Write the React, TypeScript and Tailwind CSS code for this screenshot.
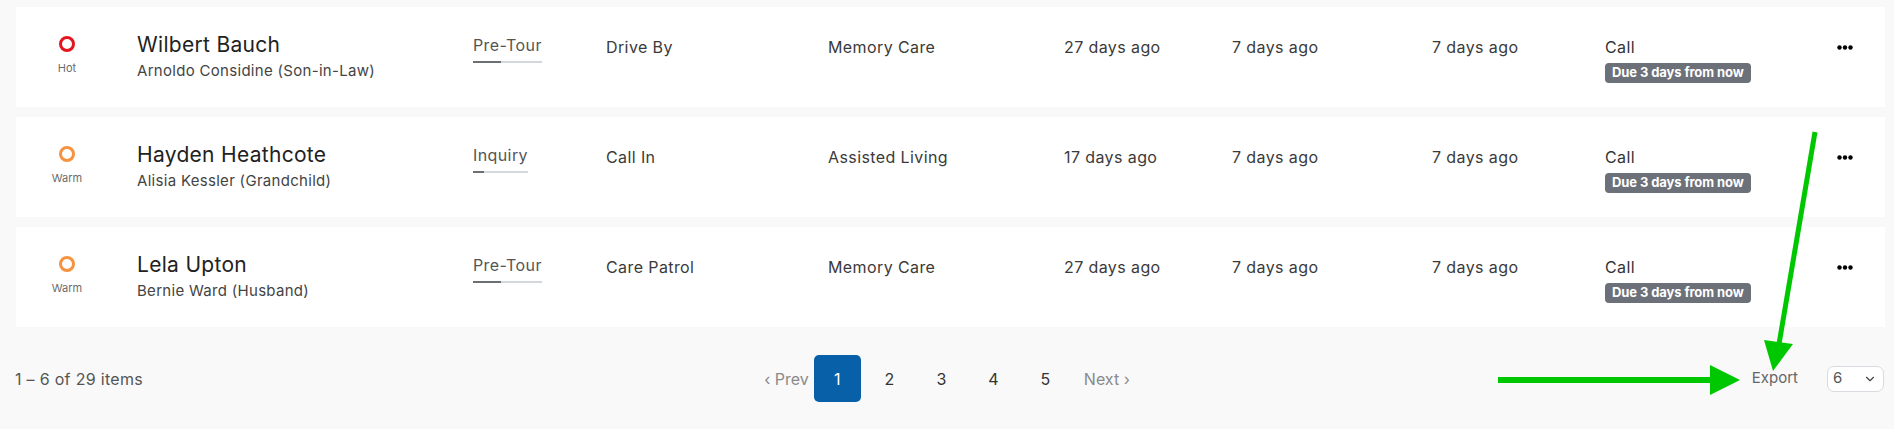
import { ChevronDown } from 'lucide-react';

type Lead = {
  temp: 'Hot' | 'Warm';
  name: string;
  contact: string;
  stage: string;
  progress: number;
  source: string;
  care: string;
  created: string;
  updated: string;
  touched: string;
  task: string;
  due: string;
};

const leads: Lead[] = [
  {
    temp: 'Hot',
    name: 'Wilbert Bauch',
    contact: 'Arnoldo Considine (Son-in-Law)',
    stage: 'Pre-Tour',
    progress: 40,
    source: 'Drive By',
    care: 'Memory Care',
    created: '27 days ago',
    updated: '7 days ago',
    touched: '7 days ago',
    task: 'Call',
    due: 'Due 3 days from now',
  },
  {
    temp: 'Warm',
    name: 'Hayden Heathcote',
    contact: 'Alisia Kessler (Grandchild)',
    stage: 'Inquiry',
    progress: 20,
    source: 'Call In',
    care: 'Assisted Living',
    created: '17 days ago',
    updated: '7 days ago',
    touched: '7 days ago',
    task: 'Call',
    due: 'Due 3 days from now',
  },
  {
    temp: 'Warm',
    name: 'Lela Upton',
    contact: 'Bernie Ward (Husband)',
    stage: 'Pre-Tour',
    progress: 40,
    source: 'Care Patrol',
    care: 'Memory Care',
    created: '27 days ago',
    updated: '7 days ago',
    touched: '7 days ago',
    task: 'Call',
    due: 'Due 3 days from now',
  },
];

function Dots() {
  return (
    <svg width="16" height="5" viewBox="0 0 16 5" className="text-black">
      <circle cx="2.5" cy="2.5" r="2.2" fill="currentColor" />
      <circle cx="8" cy="2.5" r="2.2" fill="currentColor" />
      <circle cx="13.5" cy="2.5" r="2.2" fill="currentColor" />
    </svg>
  );
}

function LeadRow({ lead }: { lead: Lead }) {
  const hot = lead.temp === 'Hot';
  return (
    <div className="flex h-[100px] items-start bg-white text-[16px] tracking-[0.4px] text-[#3a3a3a]">
      {/* temperature */}
      <div className="flex w-[102px] flex-col items-center pt-[29px] tracking-normal">
        <span
          className={
            hot
              ? 'h-4 w-4 rounded-full border-[3px] border-[#e3161f]'
              : 'h-4 w-4 rounded-full border-[3px] border-[#f7923f]'
          }
        />
        <span className="mt-[8px] text-[11px] leading-4 text-[#6b6b6b]">{lead.temp}</span>
      </div>

      {/* name */}
      <div className="ml-[19px] w-[336px] pt-[24px]">
        <div className="text-[21px] leading-[28px] tracking-[0.3px] text-[#222]">{lead.name}</div>
        <div className="text-[15px] leading-[24px] tracking-[0.3px] text-[#444]">{lead.contact}</div>
      </div>

      {/* stage */}
      <div className="w-[133px] pt-[26px]">
        <div className="inline-block">
          <div className="leading-[24px] text-[#555]">{lead.stage}</div>
          <div className="mt-[4px] h-[2px] w-full bg-[#d4d7dc]">
            <div className="h-full bg-[#6b6e73]" style={{ width: `${lead.progress}%` }} />
          </div>
        </div>
      </div>

      <div className="w-[222px] pt-[28px] leading-[24px]">{lead.source}</div>
      <div className="w-[236px] pt-[28px] leading-[24px]">{lead.care}</div>
      <div className="w-[168px] pt-[28px] leading-[24px]">{lead.created}</div>
      <div className="w-[200px] pt-[28px] leading-[24px]">{lead.updated}</div>
      <div className="w-[173px] pt-[28px] leading-[24px]">{lead.touched}</div>

      {/* next task */}
      <div className="w-[232px] pt-[28px]">
        <div className="leading-[24px] text-[#333]">{lead.task}</div>
        <span className="mt-[3px] inline-flex h-5 items-center rounded-[4px] bg-[#6c7079] px-[7px] text-[13px] font-bold tracking-[-0.1px] text-white">
          {lead.due}
        </span>
      </div>

      <div className="pt-[38px]">
        <Dots />
      </div>
    </div>
  );
}

function Pagination() {
  const pages = [1, 2, 3, 4, 5];
  return (
    <div className="flex items-center gap-[5px] text-[16px]">
      <span className="text-[#8a8a8a]">‹ Prev</span>
      {pages.map((p) =>
        p === 1 ? (
          <span
            key={p}
            className="flex h-[47px] w-[47px] items-center justify-center rounded-[5px] bg-[#0861a8] text-white"
          >
            {p}
          </span>
        ) : (
          <span key={p} className="flex h-[47px] w-[47px] items-center justify-center text-[#333]">
            {p}
          </span>
        ),
      )}
      <span className="ml-[10px] text-[#8a8a8a]">Next ›</span>
    </div>
  );
}

function Arrows() {
  return (
    <svg
      className="pointer-events-none absolute left-0 top-0"
      width="1894"
      height="429"
      viewBox="0 0 1894 429"
    >
      <line x1="1498" y1="380" x2="1714" y2="380" stroke="#00c800" strokeWidth="6" />
      <polygon points="1710,365 1740,380 1710,395" fill="#00c800" />
      <line x1="1815" y1="132" x2="1779" y2="344" stroke="#00c800" strokeWidth="5" />
      <polygon points="1764,340 1773,371 1793,344" fill="#00c800" />
    </svg>
  );
}

export default function App() {
  return (
    <div
      className="relative h-[429px] w-[1894px] overflow-hidden bg-[#f9f9f9]"
      style={{ fontFamily: 'Inter, "Noto Sans", sans-serif' }}
    >
      <div className="flex flex-col gap-[10px] pl-[16px] pr-[9px] pt-[7px]">
        {leads.map((l) => (
          <LeadRow key={l.name} lead={l} />
        ))}
      </div>

      <div className="mt-[28px] grid h-[47px] grid-cols-3 items-center">
        <div className="pl-[15px] text-[16px] tracking-[0.3px] text-[#555]">1 – 6 of 29 items</div>
        <div className="flex justify-center">
          <Pagination />
        </div>
        <div className="flex items-center justify-end gap-[29px] pr-[10px]">
          <span className="text-[15px] text-[#666]">Export</span>
          <div className="flex h-[26px] w-[57px] items-center justify-between rounded-[7px] border border-[#d9dbe0] bg-white pl-[5px] pr-[6px] text-[15px] text-[#555]">
            <span>6</span>
            <ChevronDown size={14} strokeWidth={2} className="text-[#444]" />
          </div>
        </div>
      </div>

      <Arrows />
    </div>
  );
}
